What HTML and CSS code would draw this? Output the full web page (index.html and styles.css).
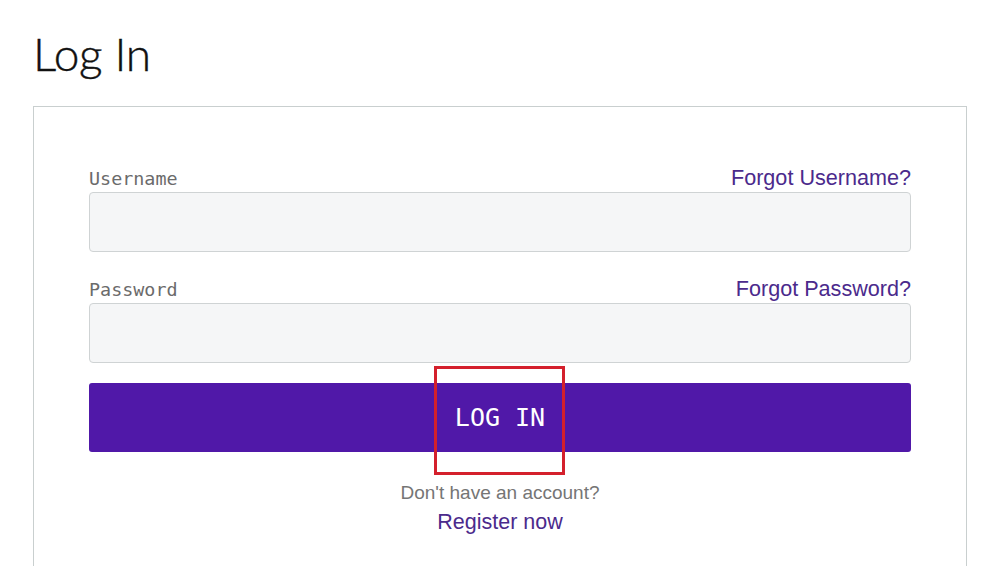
FILE: index.html
```html
<!DOCTYPE html>
<html lang="en">
<head>
<meta charset="utf-8">
<title>Log In</title>
<link rel="stylesheet" href="styles.css">
</head>
<body>
<main class="page">
  <h1 class="title">Log In</h1>
  <section class="card">
    <form class="form">
      <div class="field">
        <div class="field-head">
          <label class="label" for="username">Username</label>
          <a class="link" href="#">Forgot Username?</a>
        </div>
        <input class="input" id="username" type="text">
      </div>
      <div class="field">
        <div class="field-head">
          <label class="label" for="password">Password</label>
          <a class="link" href="#">Forgot Password?</a>
        </div>
        <input class="input" id="password" type="password">
      </div>
      <div class="submit-wrap">
        <button class="submit" type="button">LOG IN</button>
        <span class="highlight"></span>
      </div>
      <p class="note">Don't have an account?</p>
      <a class="register" href="#">Register now</a>
    </form>
  </section>
</main>
</body>
</html>
```
FILE: styles.css
```css
html, body {
  margin: 0;
  padding: 0;
  background: #ffffff;
  height: 566px;
  overflow: hidden;
}
.page {
  padding: 0 23px 0 33px;
}
.title {
  margin: 0;
  padding-top: 26px;
  height: 106px;
  box-sizing: border-box;
  font-family: "Lato", sans-serif;
  font-weight: 300;
  font-size: 46px;
  line-height: 56px;
  color: #111111;
  letter-spacing: -0.3px;
  -webkit-text-stroke: 0.4px #111111;
}
.card {
  border: 1px solid #c9cfcf;
  border-bottom: none;
  height: 480px;
  padding: 0 55px;
}
.form {
  display: flex;
  flex-direction: column;
  padding-top: 58px;
}
.field {
  display: flex;
  flex-direction: column;
  margin-bottom: 24px;
}
.field + .field {
  margin-bottom: 20px;
}
.field-head {
  display: flex;
  justify-content: space-between;
  align-items: baseline;
  height: 24px;
  margin-bottom: 3px;
}
.label {
  font-family: "DejaVu Sans Mono", monospace;
  font-size: 18.4px;
  color: #6b6b6b;
}
.link {
  font-family: "Liberation Sans", Arial, sans-serif;
  font-size: 21.6px;
  color: #4b2a8c;
  text-decoration: none;
}
.input {
  box-sizing: border-box;
  height: 60px;
  width: 100%;
  background: #f5f6f7;
  border: 1px solid #cfd3d4;
  border-radius: 4px;
  margin: 0;
}
.submit-wrap {
  position: relative;
}
.submit {
  display: block;
  width: 100%;
  height: 69px;
  border: none;
  border-radius: 3px;
  background: #5018a8;
  color: #ffffff;
  font-family: "DejaVu Sans Mono", monospace;
  font-size: 25px;
  padding: 0;
}
.highlight {
  position: absolute;
  left: 345px;
  top: -17px;
  width: 131px;
  height: 109px;
  box-sizing: border-box;
  border: 3px solid #d4202c;
  pointer-events: none;
}
.note {
  margin: 30px 0 0;
  text-align: center;
  font-family: "Liberation Sans", Arial, sans-serif;
  font-size: 19px;
  line-height: 22px;
  color: #757575;
}
.register {
  align-self: center;
  margin-top: 5px;
  font-family: "Liberation Sans", Arial, sans-serif;
  font-size: 21.5px;
  line-height: 26px;
  color: #4b2a8c;
  text-decoration: none;
}
```
